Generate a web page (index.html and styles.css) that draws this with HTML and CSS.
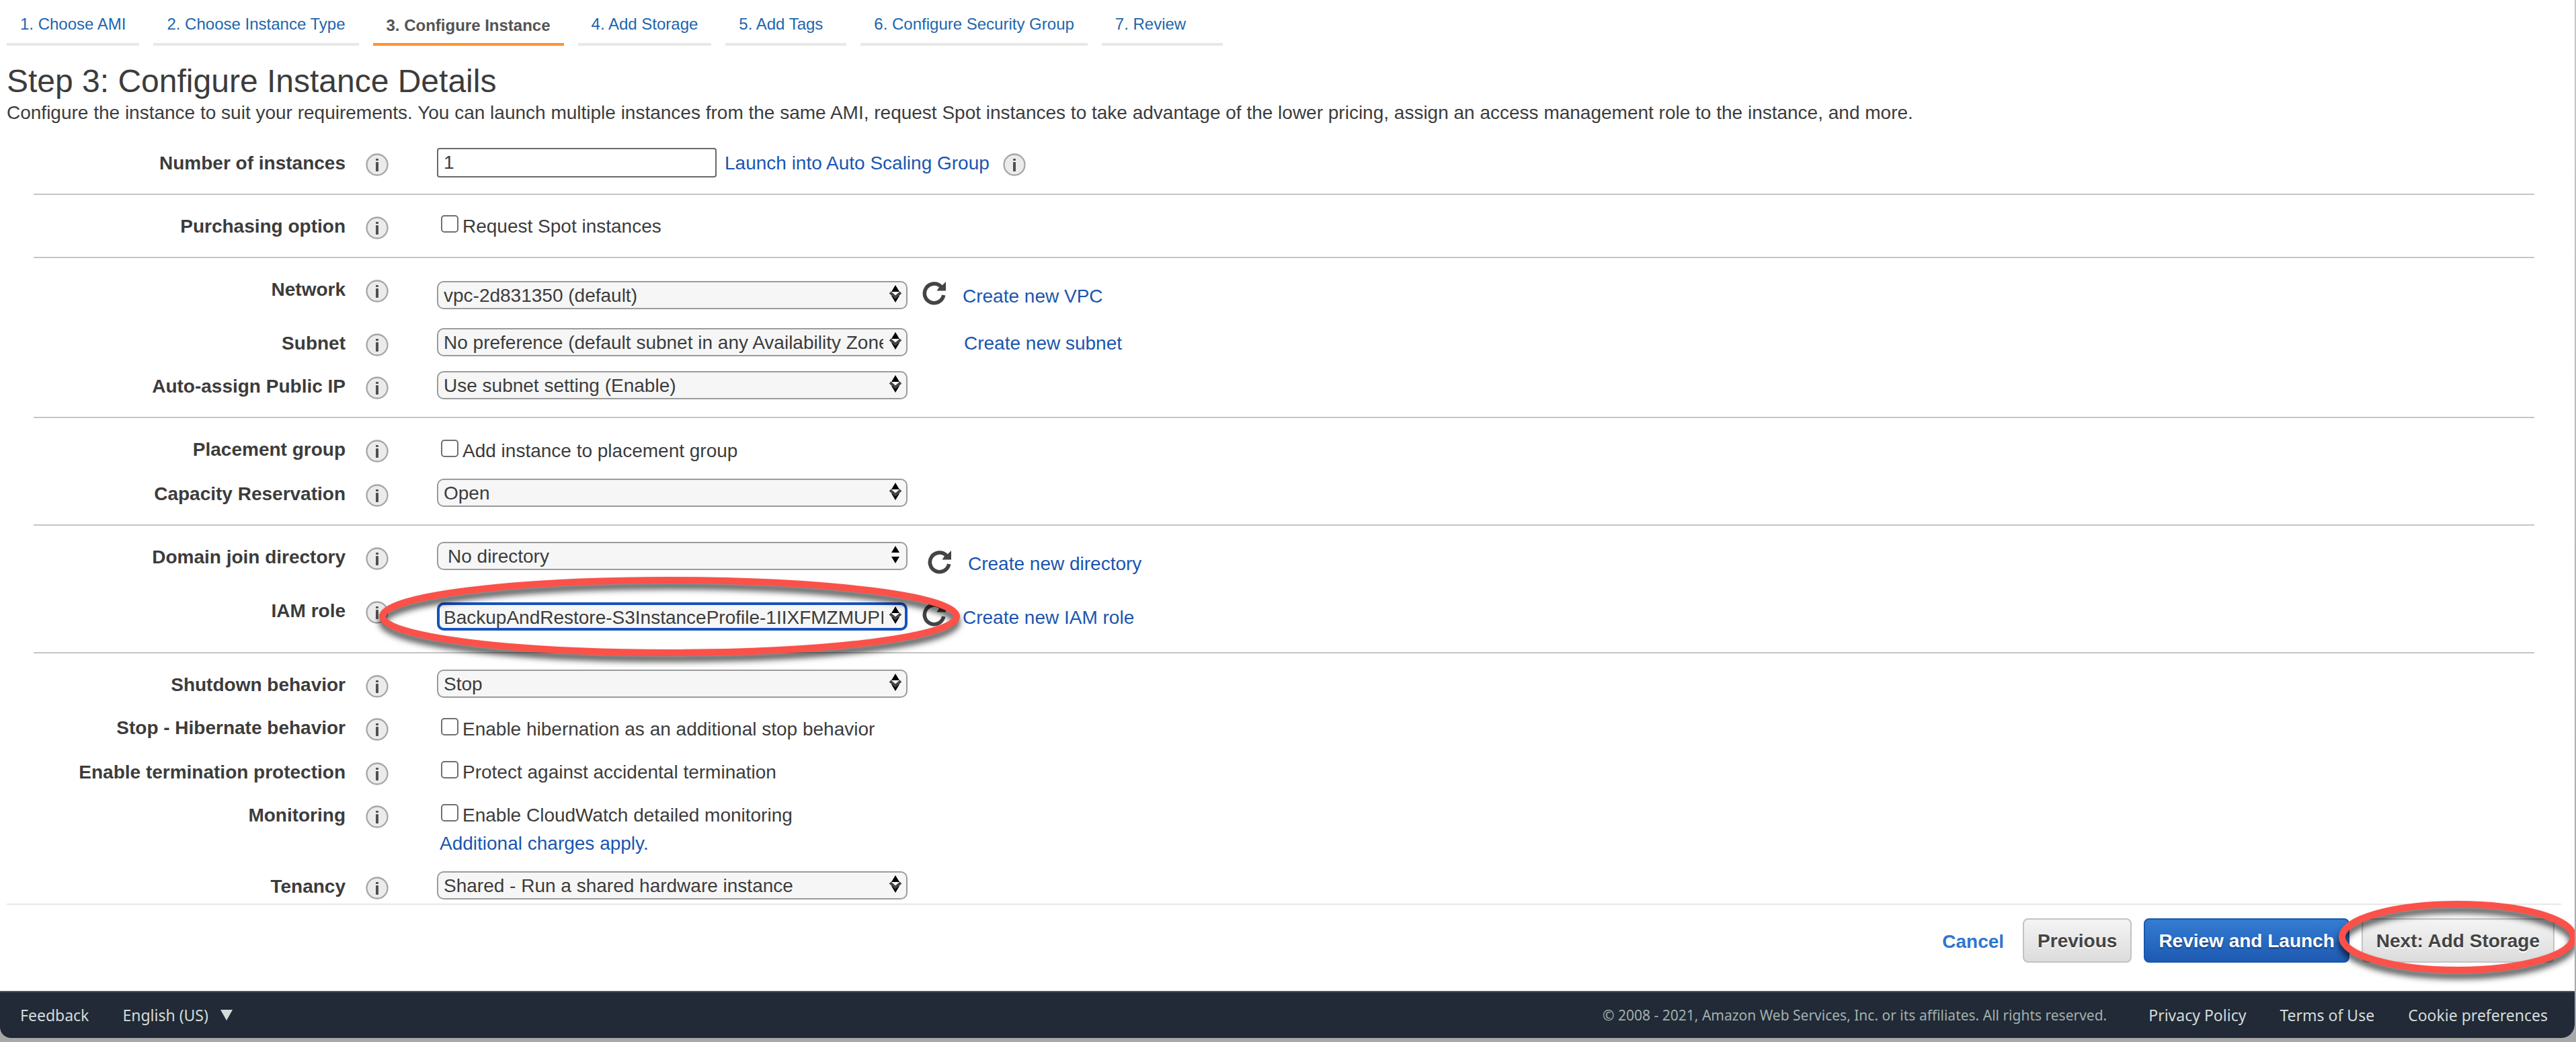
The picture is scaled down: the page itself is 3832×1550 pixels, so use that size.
FILE: index.html
```html
<!DOCTYPE html>
<html lang="en">
<head>
<meta charset="utf-8">
<title>Step 3: Configure Instance Details</title>
<link rel="stylesheet" href="styles.css">
</head>
<body>
<svg class="defs" aria-hidden="true">
  <symbol id="info" viewBox="0 0 34 34">
    <circle cx="17" cy="17" r="15.5" fill="#ebebeb" stroke="#a6a6a6" stroke-width="2.3"/>
    <rect x="15" y="8" width="4" height="3" rx="1" fill="#505050"/>
    <rect x="15" y="13" width="4" height="14" rx="1" fill="#505050"/>
  </symbol>
  <symbol id="refresh" viewBox="0 0 36 36">
    <path d="M28 8.500A14.300 14.300 0 1 0 31.700 21" fill="none" stroke="#444" stroke-width="5.6"/>
    <path d="M35 1v13.500H21.500l3-4.500 5-3.500z" fill="#444"/>
  </symbol>
</svg>
<div class="window">
  <nav class="steps" aria-label="Wizard steps">
    <a class="step" href="#">1. Choose AMI</a>
    <a class="step" href="#">2. Choose Instance Type</a>
    <a class="step step--current" href="#" aria-current="step">3. Configure Instance</a>
    <a class="step" href="#">4. Add Storage</a>
    <a class="step" href="#">5. Add Tags</a>
    <a class="step" href="#">6. Configure Security Group</a>
    <a class="step" href="#">7. Review</a>
  </nav>

  <header class="intro">
    <h1>Step 3: Configure Instance Details</h1>
    <p>Configure the instance to suit your requirements. You can launch multiple instances from the same AMI, request Spot instances to take advantage of the lower pricing, assign an access management role to the instance, and more.</p>
  </header>

  <main class="form">
    <section class="group">
      <div class="row">
        <label class="name" for="count">Number of instances</label>
        <svg class="info"><use href="#info"/></svg>
        <div class="field"><input class="text" id="count" type="text" value="1"><a class="beside" href="#">Launch into Auto Scaling Group</a><svg class="info"><use href="#info"/></svg></div>
      </div>
    </section>

    <section class="group">
      <div class="row">
        <span class="name">Purchasing option</span>
        <svg class="info"><use href="#info"/></svg>
        <label class="check"><input type="checkbox">Request Spot instances</label>
      </div>
    </section>

    <section class="group">
      <div class="row row--tall">
        <label class="name" for="network">Network</label>
        <svg class="info"><use href="#info"/></svg>
        <div class="field field--low"><select id="network"><option>vpc-2d831350 (default)</option></select><button class="refresh" type="button" aria-label="Refresh"><svg><use href="#refresh"/></svg></button><a class="create" href="#">Create new VPC</a></div>
      </div>
      <div class="row">
        <label class="name" for="subnet">Subnet</label>
        <svg class="info"><use href="#info"/></svg>
        <div class="field"><select id="subnet"><option>No preference (default subnet in any Availability Zone)</option></select><a class="create create--alone" href="#">Create new subnet</a></div>
      </div>
      <div class="row">
        <label class="name" for="public-ip">Auto-assign Public IP</label>
        <svg class="info"><use href="#info"/></svg>
        <div class="field"><select id="public-ip"><option>Use subnet setting (Enable)</option></select></div>
      </div>
    </section>

    <section class="group">
      <div class="row row--roomy">
        <span class="name">Placement group</span>
        <svg class="info"><use href="#info"/></svg>
        <label class="check check--low"><input type="checkbox">Add instance to placement group</label>
      </div>
      <div class="row">
        <label class="name" for="capacity">Capacity Reservation</label>
        <svg class="info"><use href="#info"/></svg>
        <div class="field"><select id="capacity"><option>Open</option></select></div>
      </div>
    </section>

    <section class="group">
      <div class="row row--tall">
        <label class="name" for="directory">Domain join directory</label>
        <svg class="info"><use href="#info"/></svg>
        <div class="field field--directory"><select class="plain" id="directory"><option>No directory</option></select><button class="refresh" type="button" aria-label="Refresh"><svg><use href="#refresh"/></svg></button><a class="create" href="#">Create new directory</a></div>
      </div>
      <div class="row row--tall">
        <label class="name" for="iam">IAM role</label>
        <svg class="info"><use href="#info"/></svg>
        <div class="field field--low"><select class="active" id="iam"><option>BackupAndRestore-S3InstanceProfile-1IIXFMZMUPI</option></select><button class="refresh" type="button" aria-label="Refresh"><svg><use href="#refresh"/></svg></button><a class="create" href="#">Create new IAM role</a>
          <svg class="ring ring--role" aria-hidden="true"><ellipse cx="50%" cy="50%"/></svg>
        </div>
      </div>
    </section>

    <section class="group group--last">
      <div class="row">
        <label class="name" for="shutdown">Shutdown behavior</label>
        <svg class="info"><use href="#info"/></svg>
        <div class="field"><select id="shutdown"><option>Stop</option></select></div>
      </div>
      <div class="row row--roomy">
        <span class="name">Stop - Hibernate behavior</span>
        <svg class="info"><use href="#info"/></svg>
        <label class="check check--low"><input type="checkbox">Enable hibernation as an additional stop behavior</label>
      </div>
      <div class="row">
        <span class="name">Enable termination protection</span>
        <svg class="info"><use href="#info"/></svg>
        <label class="check"><input type="checkbox">Protect against accidental termination</label>
      </div>
      <div class="row row--note">
        <span class="name">Monitoring</span>
        <svg class="info"><use href="#info"/></svg>
        <div>
          <label class="check"><input type="checkbox">Enable CloudWatch detailed monitoring</label>
          <a class="note" href="#">Additional charges apply.</a>
        </div>
      </div>
      <div class="row row--end">
        <label class="name" for="tenancy">Tenancy</label>
        <svg class="info"><use href="#info"/></svg>
        <div class="field"><select id="tenancy"><option>Shared - Run a shared hardware instance</option></select></div>
      </div>
    </section>
  </main>

  <div class="actions">
    <a class="cancel" href="#">Cancel</a>
    <button class="button" type="button">Previous</button>
    <button class="button button--primary" type="button">Review and Launch</button>
    <div class="next">
      <button class="button" type="button">Next: Add Storage</button>
      <svg class="ring ring--next" aria-hidden="true"><ellipse cx="50%" cy="50%"/></svg>
    </div>
  </div>

  <footer class="footer">
    <a href="#">Feedback</a>
    <button class="language" type="button">English (US)<svg viewBox="0 0 18 16"><path d="M0 0h18L9 16z" fill="#d5dbdb"/></svg></button>
    <span class="copyright">© 2008 - 2021, Amazon Web Services, Inc. or its affiliates. All rights reserved.</span>
    <a href="#">Privacy Policy</a>
    <a href="#">Terms of Use</a>
    <a href="#">Cookie preferences</a>
  </footer>
</div>
</body>
</html>
```
FILE: styles.css
```css
* { box-sizing: border-box; }

body {
  margin: 0;
  min-height: 100vh;
  padding-right: 2px;
  background: linear-gradient(#c8c8c8, #a8a8a8);
  font: 28px/34px "Liberation Sans", Arial, sans-serif;
  color: #3c3c3c;
  overflow: hidden;
}

a { color: #1a56b0; text-decoration: none; }
.defs { position: absolute; width: 0; height: 0; }

.window {
  background: #fff;
  border-radius: 0 0 20px 16px;
  overflow: hidden;
}

/* Wizard steps */
.steps { display: flex; gap: 21px; padding: 0 10px; }
.step {
  min-width: 180px;
  height: 68px;
  padding: 21px 20px 0;
  border-bottom: 4px solid #e8e8e8;
  font-size: 24px;
  line-height: 30px;
  color: #1d66ad;
}
.step--current {
  padding-top: 23px;
  border-color: #ff9130;
  font-weight: bold;
  color: #545454;
}

.intro { padding: 28px 10px 0; }
.intro h1 { margin: 0 0 5px; font-size: 48px; line-height: 50px; font-weight: normal; }
.intro p { margin: 0; }

/* Form */
.form {
  margin: 11px 20px 0 10px;
  padding: 0 40px;
  border-bottom: 2px solid #e8e8e8;
}
.group { padding: 24px 0 4px; border-bottom: 2px solid #c5c5c5; }
.group--last { padding-bottom: 0; border: 0; }

.row {
  display: grid;
  grid-template-columns: 464px 34px 1fr;
  column-gap: 30px;
  align-items: start;
  min-height: 64px;
}
.row > :last-child { margin-left: 42px; }
.row--roomy { min-height: 66px; }
.row--tall { min-height: 80px; }
.row--note { min-height: 106px; }
.row--end { min-height: 48px; }

.name { padding-top: 6px; font-weight: bold; text-align: right; }
.info { width: 34px; height: 34px; margin-top: 8px; display: block; }

.field { position: relative; display: flex; align-items: flex-start; }
.field--low { padding-top: 10px; }

.text, select {
  height: 42px;
  margin: 0;
  font: inherit;
  color: inherit;
}
.text {
  width: 416px;
  height: 44px;
  padding: 0 8px;
  border: 2px solid #696969;
  border-radius: 4px;
  background: #fff;
}
select {
  width: 700px;
  padding: 2px 34px 0 8px;
  border: 2px solid #9b9b9b;
  border-radius: 10px;
  appearance: none;
  background: #f6f6f6 url("data:image/svg+xml,%3Csvg xmlns='http://www.w3.org/2000/svg' width='20' height='28'%3E%3Cpath d='M10 1l6 10H4zM10 27l6-10H4z'/%3E%3Cpath d='M5 11h10l-5 5z' fill='%23fff'/%3E%3Cpath d='M2 12l8 7 8-7' fill='none' stroke='%23444' stroke-width='4'/%3E%3C/svg%3E") no-repeat right 6px top 3px;
}
select.plain {
  padding-left: 14px;
  background-image: url("data:image/svg+xml,%3Csvg xmlns='http://www.w3.org/2000/svg' width='20' height='28'%3E%3Cpath d='M10 1l6 10H4zM10 27l6-10H4z'/%3E%3C/svg%3E");
}
select.active {
  padding: 2px 32px 0 6px;
  border: 4px solid #1552c0;
  background-position: right 4px top 1px;
}

.beside { margin: 6px 20px 0 12px; }
.refresh {
  width: 36px;
  height: 36px;
  margin-left: 22px;
  padding: 0;
  border: 0;
  background: none;
}
.refresh svg { display: block; width: 36px; height: 36px; }
.create { margin: 6px 0 0 24px; }
.create--alone { margin-left: 84px; }
.field--directory .refresh { margin: 12px 0 0 30px; }
.field--directory .create { margin-top: 16px; }

.check { display: flex; align-items: flex-start; gap: 6px; padding: 6px 0 0 6px; }
.check--low { padding-top: 8px; }
.check input {
  width: 26px;
  height: 26px;
  margin: 0;
  border: 2px solid #707070;
  border-radius: 5px;
  appearance: none;
  background: #fff;
}
.note { display: block; padding: 8px 0 0 4px; }

/* Highlight rings */
.ring {
  position: absolute;
  overflow: visible;
  pointer-events: none;
  z-index: 1;
  filter: drop-shadow(0 8px 5px rgba(0, 0, 0, .7));
}
.ring ellipse { fill: none; stroke: #fb5149; stroke-width: 10px; }
.ring--role { left: -86px; top: -28px; width: 864px; height: 118px; }
.ring--role ellipse { rx: 427px; ry: 54px; }
.ring--next { left: -34px; top: -26px; width: 354px; height: 108px; }
.ring--next ellipse { rx: 172px; ry: 49px; }

/* Actions */
.actions {
  display: flex;
  justify-content: flex-end;
  align-items: flex-start;
  gap: 18px;
  padding: 20px 30px 42px;
  font-weight: bold;
}
.cancel { margin: 18px 10px 0 0; color: #2e77d0; }
.button {
  height: 66px;
  padding: 2px 20px 0;
  border: 2px solid #c3c3c3;
  border-radius: 8px;
  background: linear-gradient(#f4f4f4, #dcdcdc);
  font: inherit;
  color: #444;
  text-shadow: 0 2px 0 #fff;
}
.button--primary {
  border-color: #1a58ae;
  background: linear-gradient(#347cd3, #1e5ab2);
  color: #fff;
  text-shadow: 0 2px 2px rgba(0, 0, 0, .4);
}
.next { position: relative; }

/* Footer */
.footer {
  display: flex;
  align-items: center;
  height: 70px;
  padding: 0 40px 0 30px;
  gap: 50px;
  border-top: 2px solid #4b555c;
  background: #212a36;
  font: 23px/32px "Noto Sans", sans-serif;
}
.footer a, .language { color: #d5dbdb; }
.language {
  display: flex;
  align-items: center;
  gap: 18px;
  padding: 0;
  border: 0;
  background: none;
  font: inherit;
}
.language svg { width: 18px; height: 16px; }
.copyright { margin-left: auto; margin-right: 12px; font-size: 21px; color: #a2b0b0; }
```
